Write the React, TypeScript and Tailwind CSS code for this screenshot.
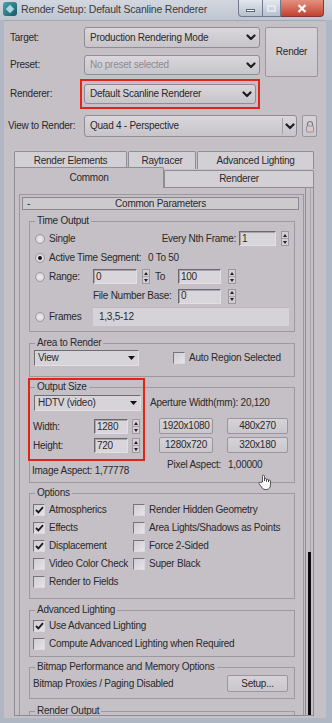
import React from "react";

const Chevron = () => (
  <svg width="10" height="7" viewBox="0 0 10 7">
    <path d="M1.5 1.5 L5 5 L8.5 1.5" fill="none" stroke="#1f1e21" strokeWidth="2.2" strokeLinecap="round" strokeLinejoin="round" />
  </svg>
);

const Tri = () => (
  <svg width="7" height="4" viewBox="0 0 7 4">
    <path d="M0 0 H7 L3.5 4 Z" fill="#111" />
  </svg>
);

function Combo({ text, cls, muted = false, divider = false }: { text: string; cls: string; muted?: boolean; divider?: boolean }) {
  return (
    <div className={`${cls} flex items-center rounded-[3px] border border-[#8f8c94] bg-linear-to-b from-[#dad7dc] to-[#c8c5ca] pl-[5px]`}>
      <span className={`flex-1 truncate ${muted ? "text-[#8e8b91]" : ""}`}>{text}</span>
      {divider ? (
        <>
          <div className="w-px self-stretch my-[2px] bg-[#a4a1a8]" />
          <div className="w-[13px] flex items-center justify-center">
            <Chevron />
          </div>
        </>
      ) : (
        <div className="w-[16px] flex items-center justify-center">
          <Chevron />
        </div>
      )}
    </div>
  );
}

function MaxCombo({ text, cls }: { text: string; cls: string }) {
  return (
    <div className={`${cls} flex items-center bg-[#d7d4d9] border border-t-[#6f6c73] border-l-[#6f6c73] border-b-[#e3e0e5] border-r-[#e3e0e5] pl-[3px]`}>
      <span className="flex-1">{text}</span>
      <div className="mr-[3px] flex items-center">
        <Tri />
      </div>
    </div>
  );
}

const Spinner = () => (
  <div className="w-[8px] h-[15px] flex flex-col border border-[#9b98a0] bg-[#d2cfd4]">
    <div className="flex-1 flex items-center justify-center">
      <svg width="4" height="3" viewBox="0 0 4 3">
        <path d="M0 3 L2 0 L4 3Z" fill="#222" />
      </svg>
    </div>
    <div className="h-px bg-[#a5a2a9]" />
    <div className="flex-1 flex items-center justify-center">
      <svg width="4" height="3" viewBox="0 0 4 3">
        <path d="M0 0 L2 3 L4 0Z" fill="#222" />
      </svg>
    </div>
  </div>
);

function Num({ v, cls }: { v: string; cls: string }) {
  return (
    <div className={`${cls} h-[15px] flex items-center pl-[2px] bg-[#d9d6db] border border-t-[#6a676e] border-l-[#6a676e] border-b-[#e2dfe4] border-r-[#e2dfe4] shadow-[inset_1px_1px_0_#a7a4ab]`}>
      {v}
    </div>
  );
}

function Radio({ on = false }: { on?: boolean }) {
  return (
    <div className="w-[10px] h-[10px] rounded-full border border-[#9d9aa1] bg-radial from-[#f2f0f3] to-[#c9c6cc] flex items-center justify-center shrink-0">
      {on && <div className="w-[4px] h-[4px] rounded-full bg-[#111]" />}
    </div>
  );
}

function Check({ on = false }: { on?: boolean }) {
  return (
    <div className="w-[12px] h-[12px] border border-t-[#77747b] border-l-[#77747b] border-b-[#dcd9de] border-r-[#dcd9de] bg-linear-to-br from-[#cfccd2] to-[#e6e4e8] flex items-center justify-center shrink-0">
      {on && (
        <svg width="9" height="8" viewBox="0 0 9 8">
          <path d="M1 4 L3.4 6.4 L8 1.2" fill="none" stroke="#1a1a1a" strokeWidth="1.8" />
        </svg>
      )}
    </div>
  );
}

function Btn({ text, cls }: { text: string; cls: string }) {
  return (
    <div className={`${cls} flex items-center justify-center rounded-[2px] border border-[#99969d] bg-linear-to-b from-[#d6d3d8] to-[#cac7cc]`}>
      {text}
    </div>
  );
}

function Group({ title, cls = "", children }: { title: string; cls?: string; children?: React.ReactNode }) {
  return (
    <fieldset className={`border border-[#9c99a0] ml-[9px] w-[266px] ${cls}`}>
      <legend className="ml-[5px] px-[2px] leading-[12px]">{title}</legend>
      {children}
    </fieldset>
  );
}

function CheckItem({ label, on = false }: { label: string; on?: boolean }) {
  return (
    <div className="h-[18px] flex items-center gap-[4px]">
      <Check on={on} />
      <span className="whitespace-nowrap">{label}</span>
    </div>
  );
}

function TitleBar() {
  return (
    <div className="h-[20px] shrink-0 flex items-start bg-linear-to-b from-[#d2d7df] to-[#bfc6d1]">
      <div className="w-[14px] h-[14px] mt-[2px] ml-[3px] rounded-[3px] bg-linear-to-br from-[#4aa3ae] to-[#145b66] flex items-center justify-center">
        <div className="w-[6px] h-[6px] rotate-45 bg-[#a8dbe0]" />
      </div>
      <div className="ml-[4px] mt-[3px] text-[10.5px] leading-[13px] text-[#3b3a3e] tracking-[-0.2px]">Render Setup: Default Scanline Renderer</div>
      <div className="ml-auto mr-[8px] flex">
        <div className="w-[25px] h-[17px] rounded-bl-[4px] border border-t-0 border-[#6f7a8d] bg-linear-to-b from-[#e3e7ee] to-[#b7c0ce] flex items-center justify-center">
          <div className="w-[9px] h-[3px] bg-white border border-[#5c6677] mt-[4px]" />
        </div>
        <div className="w-[18px] h-[17px] border border-t-0 border-l-0 border-[#6f7a8d] bg-linear-to-b from-[#e3e7ee] to-[#b7c0ce] flex items-center justify-center">
          <div className="w-[9px] h-[7px] border-2 border-[#eef1f5] opacity-70" />
        </div>
        <div className="w-[43px] h-[17px] rounded-br-[4px] border border-t-0 border-l-0 border-[#7b3a33] bg-linear-to-b from-[#e4907f] to-[#c2412f] flex items-center justify-center">
          <svg width="10" height="9" viewBox="0 0 10 9">
            <path d="M1.5 1 L8.5 8 M8.5 1 L1.5 8" stroke="#fff" strokeWidth="2.2" />
          </svg>
        </div>
      </div>
    </div>
  );
}

export default function App() {
  return (
    <div className="w-[332px] h-[723px] overflow-hidden relative flex flex-col bg-[#b0b7c4] font-['Liberation_Sans',Arial,sans-serif] text-[10px] leading-[12px] tracking-[-0.25px] text-[#2a292c]">
      <TitleBar />
      <div className="h-[698px] ml-[4px] mr-[6px] shrink-0 bg-[#c4c0c5] border-t border-[#a1a8b5] flex flex-col">
        {/* top block */}
        <div className="flex mt-[6px]">
          <div className="w-[256px] flex flex-col">
            <div className="h-[21px] flex items-center">
              <div className="w-[80px] pl-[6px]">Target:</div>
              <Combo cls="w-[176px] h-[21px]" text="Production Rendering Mode" />
            </div>
            <div className="h-[20px] mt-[7px] flex items-center">
              <div className="w-[80px] pl-[6px]">Preset:</div>
              <Combo cls="w-[176px] h-[20px]" text="No preset selected" muted />
            </div>
            <div className="h-[30px] mt-[4px] flex items-center">
              <div className="w-[76px] pl-[6px]">Renderer:</div>
              <div className="w-[180px] h-[30px] border-2 border-[#e2231c] p-[2px] pt-[3px]">
                <Combo cls="w-[172px] h-[20px]" text="Default Scanline Renderer" />
              </div>
            </div>
          </div>
          <Btn cls="ml-[5px] w-[53px] h-[50px]" text="Render" />
        </div>
        {/* view to render */}
        <div className="h-[22px] mt-[6px] flex items-center">
          <div className="w-[80px] pl-[4px]">View to Render:</div>
          <Combo cls="w-[213px] h-[22px]" text="Quad 4 - Perspective" divider />
          <div className="ml-[5px] w-[15px] h-[22px] rounded-[2px] border border-[#99969d] bg-linear-to-b from-[#d6d3d8] to-[#cac7cc] flex items-center justify-center">
            <svg width="10" height="13" viewBox="0 0 10 13">
              <path d="M2.5 6 V4 a2.5 2.5 0 0 1 5 0 V6" fill="none" stroke="#7d7a80" strokeWidth="1.2" />
              <rect x="1.5" y="6" width="7" height="6" rx="1" fill="#dcc8cb" stroke="#86838a" strokeWidth="0.8" />
            </svg>
          </div>
        </div>
        {/* tabs */}
        <div className="ml-[10px] w-[300px] mt-[14px] flex flex-col">
          <div className="h-[18px] flex items-end gap-[1px]">
            <div className="w-[113px] h-[18px] rounded-t-[2px] border border-b-0 border-[#8f8c93] bg-[#d3d0d5] flex items-center justify-center">Render Elements</div>
            <div className="w-[68px] h-[18px] rounded-t-[2px] border border-b-0 border-[#8f8c93] bg-[#d3d0d5] flex items-center justify-center">Raytracer</div>
            <div className="w-[117px] h-[18px] rounded-t-[2px] border border-b-0 border-[#8f8c93] bg-[#d3d0d5] flex items-center justify-center">Advanced Lighting</div>
          </div>
          <div className="h-[18px] flex items-end">
            <div className="relative z-10 -mb-px w-[150px] h-[21px] rounded-t-[2px] border border-b-0 border-[#8f8c93] bg-[#c4c0c5] flex items-center justify-center">Common</div>
            <div className="w-[150px] h-[17px] rounded-t-[2px] border border-b-0 border-[#8f8c93] bg-[#d3d0d5] flex items-center justify-center">Renderer</div>
          </div>
        </div>
        {/* panel */}
        <div className="ml-[10px] w-[300px] flex-1 mb-[2px] border border-[#8f8c93] flex overflow-hidden">
          <div className="w-[289px] pl-[4px] pt-[6px] overflow-hidden">
            <div className="w-[285px] h-[600px] border border-[#9a97a0] flex flex-col">
              <div className="mt-[2px] ml-[2px] w-[277px] h-[13px] border border-[#8a878e] bg-[#cdcace] flex items-center relative">
                <span className="pl-[4px] absolute left-0">-</span>
                <span className="flex-1 text-center">Common Parameters</span>
              </div>
              {/* Time Output */}
              <Group title="Time Output" cls="mt-[5px]">
                <div className="pt-[2px] pb-[5px]">
                  <div className="h-[19px] flex items-center pl-[5px]">
                    <Radio />
                    <span className="ml-[4px]">Single</span>
                    <div className="ml-auto mr-[5px] flex items-center">
                      <span>Every Nth Frame:</span>
                      <Num v="1" cls="ml-[3px] w-[37px]" />
                      <div className="ml-[5px]">
                        <Spinner />
                      </div>
                    </div>
                  </div>
                  <div className="h-[19px] flex items-center pl-[5px]">
                    <Radio on />
                    <span className="ml-[4px] w-[99px]">Active Time Segment:</span>
                    <span>0 To 50</span>
                  </div>
                  <div className="h-[19px] flex items-center pl-[5px]">
                    <Radio />
                    <span className="ml-[4px] w-[44px]">Range:</span>
                    <Num v="0" cls="w-[44px]" />
                    <div className="ml-[5px]">
                      <Spinner />
                    </div>
                    <span className="ml-[5px] w-[23px]">To</span>
                    <Num v="100" cls="w-[43px]" />
                    <div className="ml-[7px]">
                      <Spinner />
                    </div>
                  </div>
                  <div className="h-[20px] flex items-center pl-[63px]">
                    <span className="w-[85px]">File Number Base:</span>
                    <Num v="0" cls="w-[43px]" />
                    <div className="ml-[7px]">
                      <Spinner />
                    </div>
                  </div>
                  <div className="h-[19px] mt-[1px] flex items-center pl-[5px]">
                    <Radio />
                    <span className="ml-[4px] w-[44px]">Frames</span>
                    <div className="w-[196px] h-[19px] bg-[#d6d3d8] border-t border-[#bdbac0] flex items-center pl-[6px]">1,3,5-12</div>
                  </div>
                </div>
              </Group>
              {/* Area to Render */}
              <Group title="Area to Render" cls="mt-[5px]">
                <div className="pt-[1px] pb-[10px] pl-[4px] flex items-center">
                  <MaxCombo cls="w-[105px] h-[16px]" text="View" />
                  <div className="ml-[34px]">
                    <Check />
                  </div>
                  <span className="ml-[4px]">Auto Region Selected</span>
                </div>
              </Group>
              {/* Output Size */}
              <div className="relative mt-[4px]">
                <Group title="Output Size">
                  <div className="flex pb-[5px]">
                    <div className="w-[111px] pl-[4px] flex flex-col pt-[2px]">
                      <MaxCombo cls="w-[107px] h-[16px]" text="HDTV (video)" />
                      <div className="mt-[8px] h-[15px] flex items-center">
                        <span className="w-[61px] -ml-[1px]">Width:</span>
                        <Num v="1280" cls="w-[34px]" />
                        <div className="ml-[4px]">
                          <Spinner />
                        </div>
                      </div>
                      <div className="mt-[4px] h-[15px] flex items-center">
                        <span className="w-[61px] -ml-[1px]">Height:</span>
                        <Num v="720" cls="w-[34px]" />
                        <div className="ml-[4px]">
                          <Spinner />
                        </div>
                      </div>
                      <div className="mt-[12px] h-[12px] -ml-[2px] whitespace-nowrap">Image Aspect: 1,77778</div>
                    </div>
                    <div className="ml-[9px] flex flex-col pt-[4px]">
                      <div className="h-[12px] whitespace-nowrap">Aperture Width(mm): 20,120</div>
                      <div className="mt-[9px] ml-[9px] grid grid-cols-[54px_61px] gap-x-[14px] gap-y-[3px]">
                        <Btn cls="h-[16px]" text="1920x1080" />
                        <Btn cls="h-[16px]" text="480x270" />
                        <Btn cls="h-[16px]" text="1280x720" />
                        <Btn cls="h-[16px]" text="320x180" />
                      </div>
                      <div className="mt-[6px] ml-[17px] h-[12px] flex whitespace-nowrap">
                        <span className="w-[61px]">Pixel Aspect:</span>
                        <span>1,00000</span>
                      </div>
                    </div>
                  </div>
                </Group>
                <div className="absolute left-[8px] top-[-3px] w-[117px] h-[83px] border-2 border-[#e2231c] pointer-events-none" />
              </div>
              {/* Options */}
              <Group title="Options" cls="mt-[4px]">
                <div className="pt-[2px] pb-[7px] pl-[3px] grid grid-cols-[100px_1fr]">
                  <CheckItem label="Atmospherics" on />
                  <CheckItem label="Render Hidden Geometry" />
                  <CheckItem label="Effects" on />
                  <CheckItem label="Area Lights/Shadows as Points" />
                  <CheckItem label="Displacement" on />
                  <CheckItem label="Force 2-Sided" />
                  <CheckItem label="Video Color Check" />
                  <CheckItem label="Super Black" />
                  <CheckItem label="Render to Fields" />
                </div>
              </Group>
              {/* Advanced Lighting */}
              <Group title="Advanced Lighting" cls="mt-[5px]">
                <div className="pt-[1px] pb-[3px] pl-[3px]">
                  <CheckItem label="Use Advanced Lighting" on />
                  <CheckItem label="Compute Advanced Lighting when Required" />
                </div>
              </Group>
              {/* Bitmap */}
              <Group title="Bitmap Performance and Memory Options" cls="mt-[4px]">
                <div className="pt-[2px] pb-[6px] pl-[3px] pr-[6px] h-[25px] flex items-center">
                  <span>Bitmap Proxies / Paging Disabled</span>
                  <Btn cls="ml-auto w-[61px] h-[17px]" text="Setup..." />
                </div>
              </Group>
              <Group title="Render Output" cls="mt-[6px]">
                <div className="h-[40px]" />
              </Group>
            </div>
          </div>
          {/* scrollbar */}
          <div className="w-[9px] flex">
            <div className="w-px bg-[#8f8c93] ml-[1px]" />
            <div className="w-[3px] ml-[2px] flex flex-col">
              <div className="h-[364px] border-r border-[#a8a5ac]" />
              <div className="flex-1 bg-[#0d0d0d]" />
            </div>
          </div>
        </div>
      </div>
      {/* hand cursor overlay */}
      <svg className="absolute left-[258px] top-[474px]" width="15" height="17" viewBox="0 0 15 17">
        <path d="M4.5 8 V2.2 a1 1 0 0 1 2 0 V7 V5.5 a1 1 0 0 1 2 0 V7.5 V6.3 a1 1 0 0 1 2 0 V8 V7.2 a1 1 0 0 1 2 0 V11 c0 2.5 -1.5 4.5 -4 4.5 h-1.5 c-1.8 0 -2.6 -1 -3.5 -2.5 L1 9.6 a1 1 0 0 1 1.6 -1.1 Z" fill="#fafafa" stroke="#333" strokeWidth="0.8" />
      </svg>
    </div>
  );
}
